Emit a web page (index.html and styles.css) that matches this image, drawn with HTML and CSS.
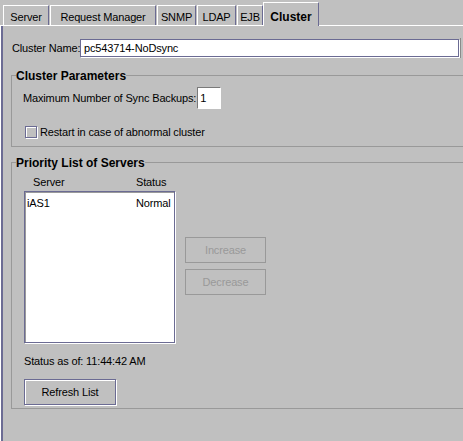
FILE: index.html
```html
<!DOCTYPE html>
<html>
<head>
<meta charset="utf-8">
<link rel="stylesheet" href="styles.css">
</head>
<body>
<div class="page">
  <div class="tabs">
    <div class="tab t-server">Server</div>
    <div class="tab t-rm">Request Manager</div>
    <div class="tab t-snmp">SNMP</div>
    <div class="tab t-ldap">LDAP</div>
    <div class="tab t-ejb">EJB</div>
    <div class="tab tab-active t-cluster">Cluster</div>
  </div>
  <div class="panel">
    <div class="name-row">
      <span class="name-label">Cluster Name:</span>
      <div class="field">pc543714-NoDsync</div>
      <div class="field-btn"><span class="field-btn-mark"></span></div>
    </div>

    <div class="group group-params">
      <div class="group-title">Cluster Parameters</div>
      <div class="backup-row">
        <span>Maximum Number of Sync Backups:</span>
        <div class="spin">1</div>
      </div>
      <div class="check-row">
        <span class="checkbox"></span>
        <span>Restart in case of abnormal cluster</span>
      </div>
    </div>

    <div class="group group-list">
      <div class="group-title">Priority List of Servers</div>
      <div class="list-area">
        <div class="list-col">
          <div class="list-head"><span class="h1">Server</span><span>Status</span></div>
          <div class="list">
            <div class="list-row"><span class="r1">iAS1</span><span>Normal</span></div>
          </div>
        </div>
        <div class="order-btns">
          <div class="btn btn-disabled">Increase</div>
          <div class="btn btn-disabled">Decrease</div>
        </div>
      </div>
      <div class="status">Status as of: 11:44:42 AM</div>
      <div class="btn btn-refresh">Refresh List</div>
    </div>
  </div>
</div>
</body>
</html>
```

FILE: styles.css
```css
html, body {
  margin: 0;
  padding: 0;
}
body {
  background: #c0c0c0;
  font-family: "Liberation Sans", Arial, sans-serif;
  font-size: 11px;
  color: #000;
  width: 463px;
  height: 441px;
  overflow: hidden;
  letter-spacing: -0.15px;
  white-space: nowrap;
}
.page {
  width: 463px;
  overflow: hidden;
}

/* tabs */
.tabs {
  display: flex;
  align-items: flex-end;
  height: 26px;
  padding-left: 3px;
  background: linear-gradient(#fff, #fff) 0 25px / 100% 1px no-repeat;
}
.tab {
  box-sizing: border-box;
  height: 20px;
  margin-bottom: 1px;
  margin-right: 1px;
  border-top: 1px solid #fff;
  border-left: 1px solid #fff;
  border-right: 1px solid #6b6b93;
  padding-top: 4px;
  line-height: 14px;
  text-align: center;
  background: #c0c0c0;
  flex: none;
}
.t-server { width: 46px; }
.t-rm { width: 106px; }
.t-snmp { width: 39px; }
.t-ldap { width: 39px; }
.t-ejb { width: 26px; margin-right: 0; }
.t-cluster { width: 56px; }
.tab-active {
  height: 24px;
  margin-bottom: 0;
  padding-top: 7px;
  font-weight: bold;
  font-size: 12px;
  letter-spacing: 0;
}

/* panel */
.panel {
  height: 415px;
  display: flex;
  flex-direction: column;
  background: linear-gradient(to right, #fff 0 1px, #6b6b93 1px 3px, transparent 3px);
}
.name-row {
  display: flex;
  align-items: center;
  height: 18px;
  margin: 13px 0 0 12px;
}
.name-label {
  width: 68px;
  flex: none;
}
.field {
  box-sizing: border-box;
  width: 379px;
  height: 18px;
  flex: none;
  background: #fff;
  border: 1px solid #6b6b93;
  box-shadow: 1px 1px 0 #fff;
  padding-left: 3px;
  line-height: 16px;
}
.field-btn {
  box-sizing: border-box;
  width: 20px;
  height: 20px;
  flex: none;
  margin-left: 1px;
  border-left: 1px solid #8a8a8a;
  padding: 6px 0 0 2px;
}
.field-btn-mark {
  display: block;
  width: 3px;
  height: 1px;
  background: #000;
}

/* groups */
.group {
  box-sizing: border-box;
  width: 470px;
  margin-left: 11px;
  border: 1px solid #999;
  display: flex;
  flex-direction: column;
  align-items: flex-start;
  flex: none;
}
.group-title {
  font-weight: bold;
  font-size: 12px;
  line-height: 14px;
  margin: -7px 0 0 4px;
  background: #c0c0c0;
  letter-spacing: 0;
}
.group-params {
  margin-top: 18px;
}
.backup-row {
  display: flex;
  align-items: center;
  height: 22px;
  margin: 4px 0 0 11px;
}
.spin {
  box-sizing: border-box;
  width: 24px;
  height: 22px;
  margin-left: 1px;
  background: #fff;
  border: 1px solid;
  border-color: #7a7a7a #fff #fff #7a7a7a;
  padding-left: 2px;
  line-height: 20px;
}
.check-row {
  display: flex;
  align-items: center;
  height: 13px;
  margin: 16px 0 8px 13px;
}
.checkbox {
  box-sizing: border-box;
  width: 12px;
  height: 12px;
  border: 1px solid #6b6b93;
  box-shadow: 1px 1px 0 #fff, inset 1px 1px 0 #fff;
  margin-right: 3px;
}

.group-list {
  margin-top: 15px;
}
.list-area {
  display: flex;
  align-items: center;
  margin: 5px 0 0 12px;
}
.list-col {
  display: flex;
  flex-direction: column;
}
.list-head {
  display: flex;
  height: 14px;
  line-height: 14px;
  padding-left: 9px;
}
.h1 { width: 103px; }
.list {
  box-sizing: border-box;
  width: 151px;
  height: 152px;
  margin-top: 2px;
  background: #fff;
  border: 1px solid #6b6b93;
  box-shadow: 1px 1px 0 #fff, inset 1px 1px 0 #9a9a9a;
  padding: 4px 0 0 2px;
}
.list-row {
  display: flex;
  line-height: 14px;
}
.r1 { width: 109px; }

.order-btns {
  display: flex;
  flex-direction: column;
  gap: 6px;
  margin: 14px 0 0 10px;
}
.btn {
  box-sizing: border-box;
  display: flex;
  align-items: center;
  justify-content: center;
}
.btn-disabled {
  width: 81px;
  height: 26px;
  border: 1px solid #999;
  color: #999;
}
.status {
  line-height: 14px;
  margin: 11px 0 0 12px;
}
.btn-refresh {
  width: 92px;
  height: 26px;
  margin: 11px 0 3px 12px;
  border: 1px solid #6b6b93;
  box-shadow: inset 1px 1px 0 #fff, 1px 1px 0 #fff;
}
```
